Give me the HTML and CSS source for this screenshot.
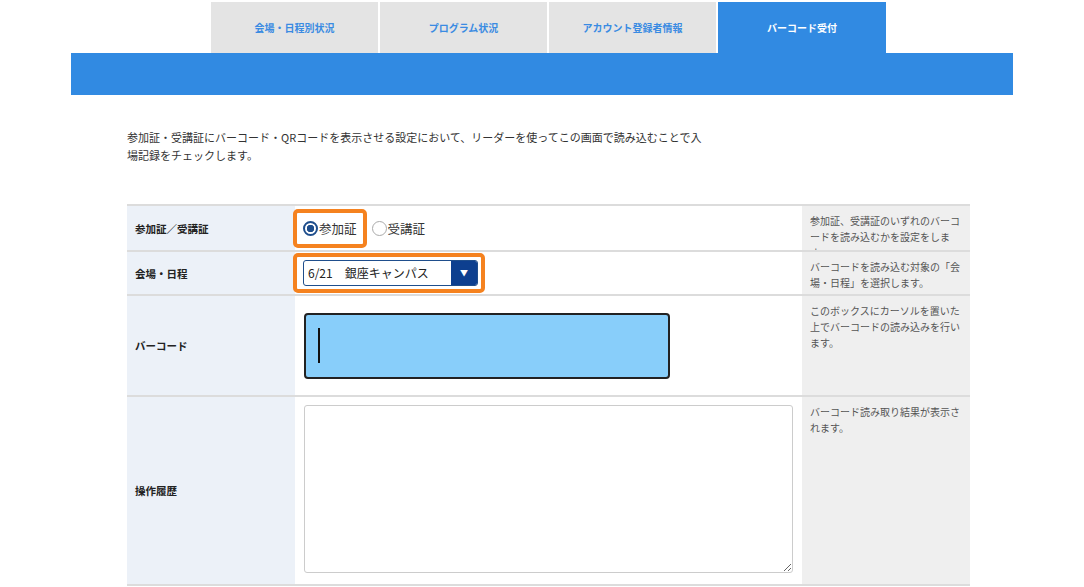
FILE: index.html
```html
<!DOCTYPE html>
<html lang="ja">
<head>
  <meta charset="UTF-8">
  <title>バーコード受付</title>
  <link rel="stylesheet" href="styles.css">
</head>
<body>
<div class="page">
  <ul class="tabs">
    <li class="tab">会場・日程別状況</li>
    <li class="tab">プログラム状況</li>
    <li class="tab">アカウント登録者情報</li>
    <li class="tab active">バーコード受付</li>
  </ul>
  <div class="bar"></div>

  <p class="intro">参加証・受講証にバーコード・QRコードを表示させる設定において、リーダーを使ってこの画面で読み込むことで入<br>場記録をチェックします。</p>

  <table class="form">
    <tr class="row-type">
      <th>参加証／受講証</th>
      <td class="field">
        <div class="inline">
          <span class="mark radios">
            <label class="radio"><span class="dot on"></span>参加証</label>
          </span>
          <label class="radio"><span class="dot"></span>受講証</label>
        </div>
      </td>
      <td class="note clip"><div>参加証、受講証のいずれのバーコードを読み込むかを設定をします。</div></td>
    </tr>
    <tr class="row-place">
      <th>会場・日程</th>
      <td class="field">
        <div class="inline">
          <span class="mark">
            <span class="select"><span class="value">6/21　銀座キャンパス</span><span class="arrow">▼</span></span>
          </span>
        </div>
      </td>
      <td class="note"><div>バーコードを読み込む対象の「会場・日程」を選択します。</div></td>
    </tr>
    <tr class="row-code">
      <th>バーコード</th>
      <td class="field">
        <div class="scan"><span class="caret"></span></div>
      </td>
      <td class="note"><div>このボックスにカーソルを置いた上でバーコードの読み込みを行います。</div></td>
    </tr>
    <tr class="row-log">
      <th>操作履歴</th>
      <td class="field">
        <textarea class="log"></textarea>
      </td>
      <td class="note"><div>バーコード読み取り結果が表示されます。</div></td>
    </tr>
  </table>
</div>
</body>
</html>
```

FILE: styles.css
```css
body {
  margin: 0;
  background-color: #FFFFFF;
  color: #222222;
  font-family: "Noto Sans CJK JP", "Noto Sans", sans-serif;
}
.page {
  width: 942px;
  margin: 0 auto;
  padding-top: 2px;
}
.tabs {
  display: flex;
  gap: 2px;
  list-style: none;
  margin: 0 0 0 140px;
  padding: 0;
}
.tab {
  width: 167px;
  height: 51px;
  line-height: 51px;
  text-align: center;
  background-color: #E4E4E4;
  color: #3A8BE2;
  font-size: 10px;
  font-weight: bold;
}
.tab.active {
  width: 168px;
  background-color: #318AE2;
  color: #FFFFFF;
}
.bar {
  height: 42px;
  background-color: #318AE2;
}
.intro {
  margin: 33px 0 0 56px;
  font-size: 11px;
  line-height: 18px;
  color: #333333;
}
.form {
  margin: 40px 0 0 56px;
  width: 843px;
  border-collapse: collapse;
  table-layout: fixed;
}
.form tr {
  border-top: 2px solid #DCDCDC;
}
.form tr:last-child {
  border-bottom: 2px solid #DCDCDC;
}
.form th {
  width: 160px;
  padding: 0 0 0 8px;
  background-color: #ECF1F8;
  text-align: left;
  font-size: 10.5px;
  font-weight: bold;
}
.form .field {
  width: 498px;
  padding: 0 0 0 9px;
}
.inline {
  display: flex;
  align-items: center;
}
.note {
  width: 152px;
  padding: 7px 8px 2px;
  background-color: #EFEFEF;
  vertical-align: top;
  font-size: 10px;
  line-height: 16px;
  color: #555555;
}
.note.clip {
  padding-bottom: 0;
}
.note.clip div {
  height: 37px;
  overflow: hidden;
}
.row-type { height: 45px; }
.row-place { height: 44px; }
.row-code { height: 101px; }
.row-log { height: 189px; }
.mark {
  display: flex;
  align-items: center;
  margin-left: -11px;
  border: 4px solid #F5821F;
  border-radius: 5px;
  padding: 3px 3px 3px 6px;
}
.radios {
  height: 31px;
  padding: 0 6px;
}
.radio {
  display: flex;
  align-items: center;
  font-size: 12.5px;
  color: #333333;
}
.mark + .radio {
  margin-left: 5px;
}
.dot {
  box-sizing: border-box;
  width: 15px;
  height: 15px;
  border: 1px solid #AAAAAA;
  border-radius: 50%;
  margin-right: 1px;
  background-color: #FFFFFF;
}
.dot.on {
  border: 2px solid #1F4E8C;
  background: radial-gradient(circle, #1F4E8C 0 3.5px, #FFFFFF 4px);
}
.select {
  display: flex;
  box-sizing: border-box;
  width: 175px;
  height: 26px;
  border: 1px solid #1F4E8C;
  border-radius: 3px;
  overflow: hidden;
}
.select .value {
  flex: 1;
  padding-left: 4px;
  line-height: 24px;
  font-size: 12px;
  color: #222222;
}
.select .arrow {
  width: 26px;
  background-color: #0D3F8F;
  color: #FFFFFF;
  font-size: 8px;
  line-height: 24px;
  text-align: center;
}
.scan {
  box-sizing: border-box;
  width: 366px;
  height: 66px;
  display: flex;
  align-items: center;
  padding-left: 12px;
  background-color: #88CEFA;
  border: 2px solid #222222;
  border-radius: 4px;
}
.caret {
  width: 2px;
  height: 35px;
  background-color: #111111;
}
.log {
  display: block;
  box-sizing: border-box;
  width: 489px;
  height: 168px;
  margin-bottom: 4px;
  border: 1px solid #CCCCCC;
  border-radius: 3px;
  resize: vertical;
  font-family: inherit;
}
```
